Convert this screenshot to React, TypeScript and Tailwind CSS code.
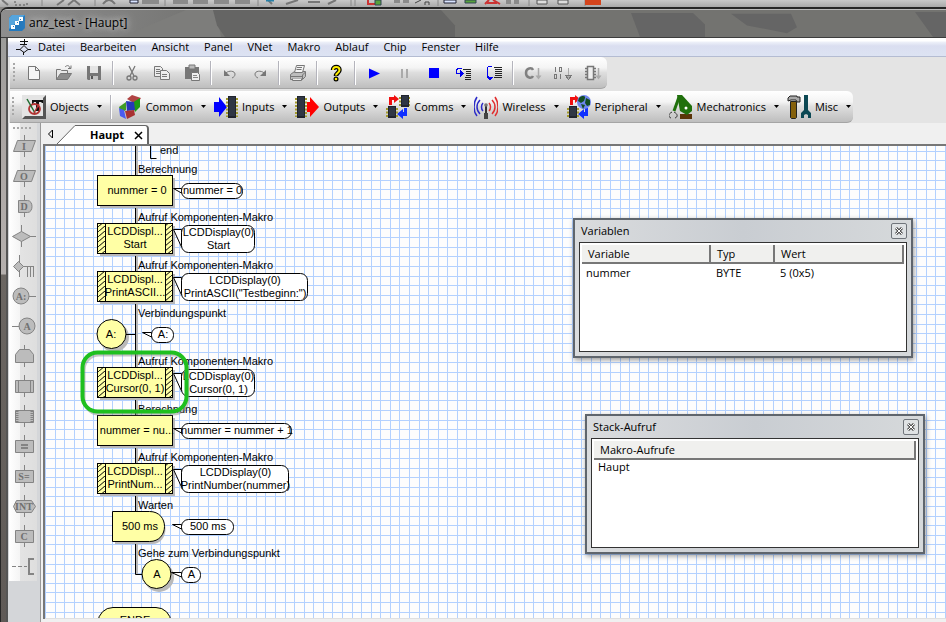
import React from 'react';

interface Callout {
  x: number;
  y: number;
  w: number;
  h: number;
  lines: string[];
}

interface MacroNode {
  y: number;
  label: string;
  lines: string[];
  striped: boolean;
  callout: Callout;
}

interface Tool {
  name: string;
  icon: React.ReactNode;
}

const menus = ['Datei', 'Bearbeiten', 'Ansicht', 'Panel', 'VNet', 'Makro', 'Ablauf', 'Chip', 'Fenster', 'Hilfe'];

const nodes: MacroNode[] = [
  { y: 29, label: 'Berechnung', lines: ['nummer = 0'], striped: false, callout: { x: 136, y: 37, w: 61, h: 15, lines: ['nummer = 0'] } },
  { y: 77, label: 'Aufruf Komponenten-Makro', lines: ['LCDDispl...', 'Start'], striped: true, callout: { x: 136, y: 79, w: 73, h: 27, lines: ['LCDDisplay(0)', 'Start'] } },
  { y: 125, label: 'Aufruf Komponenten-Makro', lines: ['LCDDispl...', 'PrintASCII...'], striped: true, callout: { x: 136, y: 127, w: 126, h: 27, lines: ['LCDDisplay(0)', 'PrintASCII("Testbeginn:")'] } },
  { y: 221, label: 'Aufruf Komponenten-Makro', lines: ['LCDDispl...', 'Cursor(0, 1)'], striped: true, callout: { x: 136, y: 223, w: 73, h: 27, lines: ['LCDDisplay(0)', 'Cursor(0, 1)'] } },
  { y: 269, label: 'Berechnung', lines: ['nummer = nu...'], striped: false, callout: { x: 136, y: 277, w: 110, h: 15, lines: ['nummer = nummer + 1'] } },
  { y: 317, label: 'Aufruf Komponenten-Makro', lines: ['LCDDispl...', 'PrintNum...'], striped: true, callout: { x: 136, y: 319, w: 107, h: 27, lines: ['LCDDisplay(0)', 'PrintNumber(nummer)'] } },
];

const gridX = Array.from({ length: 240 }, (_, i) => Math.floor(0.7 + 9.573 * i));
const gridY = Array.from({ length: 140 }, (_, i) => Math.floor(5.3 + 9.6 * i));

const NewIcon = () => <path d="M5.5 4.500h7l4 4v9h-11zM12.5 4.500v4h4" fill="#f6f6f6" stroke="#777" />;

const OpenIcon = () => (
  <g fill="none" stroke="#777">
    <path d="M3.500 17.500v-10h4l1 1h6v3" fill="#e8e8e8" />
    <path d="M3.500 17.500l4-6h11l-4 6z" fill="#8d8d8d" />
    <path d="M12 5c2-2 4-2 5 1M15 6.500h3v-3" />
  </g>
);

const SaveIcon = () => (
  <g>
    <path d="M4 4h14v14H5l-1-1z" fill="#777" />
    <path d="M7 4h8v7H7z" fill="#e4e4e4" />
    <path d="M7 14h8v4H7z" fill="#c4c4c4" />
    <path d="M8 14h2v3H8z" fill="#555" />
  </g>
);

const CutIcon = () => (
  <g fill="none" stroke="#777" strokeWidth="1.300">
    <path d="M8 4l5 10M14 4l-5 10" />
    <circle cx="8" cy="16" r="2" />
    <circle cx="14" cy="16" r="2" />
  </g>
);

const CopyIcon = () => (
  <g fill="#ededed" stroke="#777">
    <path d="M3.500 4.500h6l2 2v8h-8z" />
    <path d="M9.500 8.500h6l3 3v6h-9z" />
    <path d="M5 7.500h4M5 9.500h4M5 11.500h4M11 12.500h5M11 14.500h5" />
  </g>
);

const PasteIcon = () => (
  <g>
    <path d="M4 5h14v12H4z" fill="#777" />
    <path d="M8 3h6v4H8z" fill="#bbb" stroke="#777" />
    <path d="M10.500 10.500h6l2 2v6h-8z" fill="#f0f0f0" stroke="#777" />
    <path d="M12 13.500h4M12 15.500h5" stroke="#888" />
  </g>
);

const UndoIcon = () => (
  <g>
    <path d="M7 11c3-3 9-2 9 1 0 2-1 3-3 4" fill="none" stroke="#777" />
    <path d="M5 8v6h6z" fill="#777" />
  </g>
);

const RedoIcon = () => (
  <g>
    <path d="M15 11c-3-3-9-2-9 1 0 2 1 3 3 4" fill="none" stroke="#777" />
    <path d="M17 8v6h-6z" fill="#777" />
  </g>
);

const PrintIcon = () => (
  <g stroke="#777">
    <path d="M3.500 12.500l4-3h11v5l-3 3h-12z" fill="#bdbdbd" />
    <path d="M7.500 10.500l2-7h8l-2 7z" fill="#f4f4f4" />
    <path d="M10 5.500h5M9.500 7.500h5M3.500 14.500h12M15.500 17v-4l3-3M6 16.500h8" fill="none" />
    <path d="M5.500 16.500v2h9v-2" fill="#eee" />
  </g>
);

const HelpIcon = () => (
  <g fill="none">
    <path d="M8 8c0-4 6.500-4 6.500 0 0 3-3.500 3-3.500 6" stroke="#000" strokeWidth="4.500" />
    <circle cx="11" cy="17" r="2.500" fill="#000" />
    <path d="M8 8c0-4 6.500-4 6.500 0 0 3-3.500 3-3.500 5.500" stroke="#ffee00" strokeWidth="2" />
    <circle cx="11" cy="17" r="1.300" fill="#ffee00" />
  </g>
);

const StepIntoIcon = () => (
  <g fill="none" shapeRendering="crispEdges">
    <path d="M10 7.500h8M13 9.500h5M13 11.500h5M13 13.500h5M12 15.500h6M12 17.500h6" stroke="#222" />
    <path d="M9 6.500H5L3.500 8v3.500H7" stroke="#0000f0" />
    <path d="M7 8l4 3.500L7 15z" fill="#0000f0" />
  </g>
);

const StepOutIcon = () => (
  <g fill="none" shapeRendering="crispEdges">
    <path d="M11 5.500h8M12 7.500h7M12 9.500h7M12 11.500h7M12 13.500h7M11 15.500h8" stroke="#222" />
    <path d="M9 4.500H5.500L4.500 6v8l3 3" stroke="#0000f0" />
    <path d="M4 15h6l-3 4z" fill="#0000f0" />
  </g>
);

const DownArrow = () => (
  <g>
    <path d="M17.500 6v9" stroke="#aaa" strokeWidth="1.500" />
    <path d="M14.500 13.500h6l-3 4z" fill="#aaa" />
  </g>
);

const CompileCIcon = () => (
  <g>
    <path d="M12 8c-1-2.500-7-2.500-7 3s6 5.500 7 3" fill="none" stroke="#808080" strokeWidth="2.500" />
    <DownArrow />
  </g>
);

const CompileHexIcon = () => (
  <g fill="none" stroke="#777" shapeRendering="crispEdges">
    <path d="M4.500 5v5M8.500 5.500h2v4h-2zM3.500 12.500h2v4h-2zM9.500 12v5" />
    <DownArrow />
  </g>
);

const CompileChipIcon = () => (
  <g>
    <path d="M6.500 4.500h6v13h-6z" fill="#eee" stroke="#777" strokeWidth="1.500" />
    <path d="M4 6.500h2M4 9.500h2M4 12.500h2M4 15.500h2M13 6.500h2M13 9.500h2M13 12.500h2M13 15.500h2" stroke="#777" strokeWidth="1.500" />
    <DownArrow />
  </g>
);

const toolGroups: Tool[][] = [
  [
    { name: 'Neu', icon: <NewIcon /> },
    { name: 'Öffnen', icon: <OpenIcon /> },
    { name: 'Speichern', icon: <SaveIcon /> },
  ],
  [
    { name: 'Ausschneiden', icon: <CutIcon /> },
    { name: 'Kopieren', icon: <CopyIcon /> },
    { name: 'Einfügen', icon: <PasteIcon /> },
  ],
  [
    { name: 'Rückgängig', icon: <UndoIcon /> },
    { name: 'Wiederholen', icon: <RedoIcon /> },
  ],
  [{ name: 'Drucken', icon: <PrintIcon /> }],
  [{ name: 'Hilfe', icon: <HelpIcon /> }],
  [
    { name: 'Start', icon: <path d="M6 6.500l11 5-11 5z" fill="#0000ff" /> },
    { name: 'Pause', icon: <path d="M8 7h2v9H8zM13 7h2v9h-2z" fill="#aaa" /> },
    { name: 'Stopp', icon: <path d="M6 6h10v10H6z" fill="#0000ff" /> },
    { name: 'Einzelschritt hinein', icon: <StepIntoIcon /> },
    { name: 'Einzelschritt darüber', icon: <StepOutIcon /> },
  ],
  [
    { name: 'Nach C kompilieren', icon: <CompileCIcon /> },
    { name: 'Nach HEX kompilieren', icon: <CompileHexIcon /> },
    { name: 'Zum Chip übertragen', icon: <CompileChipIcon /> },
  ],
];

const Chip = ({ x, h = 22, y = 1 }: { x: number; h?: number; y?: number }) => (
  <g>
    <path
      d={`M${x - 1} ${y + 2}v${h - 3}M${x + 9} ${y + 2}v${h - 3}`}
      stroke="#a39a2c"
      strokeWidth="2"
      strokeDasharray="2 1.500"
    />
    <rect x={x} y={y} width="8" height={h} fill="#20242e" />
    <rect x={x + 1} y={y + 1} width="6" height={h - 3} fill="#2f3644" />
  </g>
);

const CommsArrows = () => (
  <g>
    <path d="M3 10V2h5v-2l5 4-5 4V5H6v5z" fill="#f01010" />
    <path d="M21 13v8h-4v3l-6-5 6-5v3h1v-4z" fill="#1030ff" />
  </g>
);

const components: Tool[] = [
  {
    name: 'Objects',
    icon: (
      <g fill="none">
        <path d="M0 0h24v24H0z" fill="#e4e4e4" />
        <path d="M24 0v24H0l3-3h18V3z" fill="#555" />
        <path d="M10 5h11v3h-1l-1-1h-2v9h-3V7h-2l-1 2h-1z" fill="#111" />
        <ellipse cx="12.500" cy="14" rx="5.500" ry="5" stroke="#b43434" strokeWidth="1.800" />
        <path d="M5 4l8 14" stroke="#1c6a2e" strokeWidth="1.500" />
        <path d="M12 18l5-9" stroke="#b43434" strokeWidth="1.500" />
      </g>
    ),
  },
  {
    name: 'Common',
    icon: (
      <g>
        <path d="M9 4l5-4 9 3-3 5-6-1z" fill="#b04444" />
        <path d="M14 8l8-5v9l-5 5z" fill="#1e9a16" />
        <path d="M1 12l7-5v8l-5 3z" fill="#3f9c24" />
        <path d="M8 6l8 1 1 8-8 1z" fill="#2638b8" />
        <path d="M1 13l5 2 2 9-6-3z" fill="#4a5cf0" />
        <path d="M7 16l9-1 1 5-8 4z" fill="#a83232" />
      </g>
    ),
  },
  {
    name: 'Inputs',
    icon: (
      <g>
        <path d="M0 7h5V2l8 10-8 10v-5H0z" fill="#0000ff" />
        <Chip x={14} />
      </g>
    ),
  },
  {
    name: 'Outputs',
    icon: (
      <g>
        <path d="M12 7h3V2l9 10-9 10v-5h-3z" fill="#ff0000" />
        <Chip x={2} />
      </g>
    ),
  },
  {
    name: 'Comms',
    icon: (
      <g>
        <CommsArrows />
        <Chip x={2} y={11} h={12} />
        <Chip x={15} y={0} h={12} />
      </g>
    ),
  },
  {
    name: 'Wireless',
    icon: (
      <g fill="none" strokeWidth="1.500">
        <path d="M9 8c-2 2-2 6 0 8M6 5c-4 4-4 10 0 14M3 2c-4 6-4 14 0 19" stroke="#2c2cc8" />
        <path d="M15 8c2 2 2 6 0 8M18 5c4 4 4 10 0 14M21 2c4 6 4 14 0 19" stroke="#e03030" />
        <path d="M12 10v13" stroke="#333" strokeWidth="2" />
        <path d="M10 18h4v6h-4z" fill="#444" />
        <circle cx="12" cy="10" r="1.800" fill="#777" />
      </g>
    ),
  },
  {
    name: 'Peripheral',
    icon: (
      <g>
        <CommsArrows />
        <Chip x={2} y={11} h={12} />
        <circle cx="17" cy="7" r="7" fill="#6f86ee" />
        <path d="M12 3c3-3 7-2 6 0l-1 3-3 2-3-2zM19 3l4 2v5l-3 1-2-3zM14 9l4 1-2 4z" fill="#144d24" />
      </g>
    ),
  },
  {
    name: 'Mechatronics',
    icon: (
      <g>
        <path d="M11 19h12v5H11z" fill="#5a3408" />
        <path d="M8 0h5l10 11v5l-5 4-7-4z" fill="#20700c" />
        <path d="M10 2L5 16" stroke="#20700c" strokeWidth="3" />
        <circle cx="17" cy="13" r="1.500" fill="#fff" />
        <path d="M3 17c-4 2-4 5-1 6M5 17c4 2 4 5 1 6" fill="none" stroke="#333" />
      </g>
    ),
  },
  {
    name: 'Misc',
    icon: (
      <g>
        <path d="M1 3l2-2h7v1h3v5h-3l-1-2H4L1 6z" fill="#aaa" stroke="#222" />
        <path d="M3.500 6.500h6v16l-1 1h-4l-1-1z" fill="#84600c" stroke="#222" />
        <path d="M17 0h4v15l3 3v5h-3v-3l-2-1-2 1v3h-3v-5l3-3z" fill="#0c4854" />
      </g>
    ),
  },
];

const Glyph = ({ children, x = 15 }: { children: string; x?: number }) => (
  <text x={x} y="19" textAnchor="middle" className="font-['Liberation_Serif',serif] text-[10px] font-bold" fill="#707070" stroke="none">
    {children}
  </text>
);

const sideTools: Tool[] = [
  { name: 'Eingabe', icon: <><path d="M15.500 4v22" /><path d="M8.500 9.500h18l-4 11h-18z" /><Glyph>I</Glyph></> },
  { name: 'Ausgabe', icon: <><path d="M15.500 4v22" /><path d="M8.500 9.500h18l-4 11h-18z" /><Glyph>O</Glyph></> },
  { name: 'Pause', icon: <><path d="M15.500 4v22" /><path d="M9.500 9.500h9c6 0 6 12 0 12h-9z" /><Glyph>D</Glyph></> },
  { name: 'Entscheidung', icon: <><path d="M12.500 4v22M20 15.500h7" /><path d="M3.500 15.500l9-5 9 5-9 5z" /></> },
  { name: 'Wechsel', icon: <><path d="M10.500 4v22M14 15.500h11M18.500 15v11M21.500 15v11M24.500 15v11" /><path d="M4.500 15.500l5-5 5 5-5 5z" /></> },
  { name: 'Verbindungspunkt', icon: <><path d="M18 15.500h9" /><circle cx="12" cy="15" r="8" /><Glyph x={12}>A:</Glyph></> },
  { name: 'Sprung', icon: <><path d="M3 15.500h9" /><circle cx="18" cy="15" r="8" /><Glyph x={18}>A</Glyph></> },
  { name: 'Schleife', icon: <><path d="M15.500 4v22" /><path d="M6.500 21.500v-8l4-5h10l4 5v8z" /></> },
  { name: 'Makro', icon: <><path d="M15.500 4v22" /><path d="M6.500 9.500h18v12h-18zM9.500 9.500v12M21.500 9.500v12" /></> },
  { name: 'Komponenten-Makro', icon: <><path d="M15.500 4v22" /><path d="M6.500 9.500h18v12h-18z" /><path d="M8 10v12M23 10v12" strokeDasharray="1 1" strokeWidth="3" /></> },
  { name: 'Berechnung', icon: <><path d="M15.500 4v22" /><path d="M6.500 9.500h18v12h-18z" /><path d="M12 14h7M12 17h7" strokeWidth="2" /></> },
  { name: 'Zeichenkette', icon: <><path d="M15.500 4v22" /><path d="M6.500 9.500h18v12h-18z" /><Glyph>S=</Glyph></> },
  { name: 'Interrupt', icon: <><path d="M15.500 4v22" /><path d="M4.500 15.500l3-6h15l4 6-4 6h-15z" /><Glyph>INT</Glyph></> },
  { name: 'C-Code', icon: <><path d="M15.500 4v22" /><path d="M6.500 9.500h18v12h-18z" /><Glyph>C</Glyph></> },
  { name: 'Kommentar', icon: <><path d="M3 15.500h15" strokeDasharray="4 2" /><path d="M25 8h-5v15h5" strokeWidth="2" fill="none" /></> },
];

const Grip = () => (
  <span className="mr-1 ml-0.5 h-5 w-0.5 shrink-0 bg-[repeating-linear-gradient(#a8a8a8_0_2px,transparent_2px_4px)]" />
);

const Separator = () => <span className="mx-[3px] h-6 w-0.5 shrink-0 border-r border-white bg-[#b4b4bc]" />;

const CalloutShape = ({ callout, tipX, tipY }: { callout: Callout; tipX: number; tipY: number }) => {
  const { x, y, w, h, lines } = callout;
  const cx = x + 1 + w / 2;
  return (
    <g>
      <path d={`M${x + 0.5} ${tipY + 0.5}H${tipX + 0.5}L${x + 0.5} ${y + h - 5}z`} fill="#fff" stroke="#000" />
      <rect x={x + 0.5} y={y + 0.5} width={w} height={h} rx="7" fill="#fff" stroke="#000" />
      {lines.map((line, i) => (
        <text key={line} x={cx} y={y + 11 + i * 13} textAnchor="middle">
          {line}
        </text>
      ))}
    </g>
  );
};

const FlowNode = ({ node }: { node: MacroNode }) => {
  const { y, label, lines, striped, callout } = node;
  return (
    <g>
      <text x="93" y={y - 2}>{label}</text>
      <rect x="55" y={y + 3} width="75" height="30" fill="#b9b9b9" />
      <rect x="52.5" y={y + 0.5} width="75" height="30" fill="#ffffa5" stroke="#000" />
      {striped && (
        <g stroke="#000">
          <rect x="52.5" y={y + 0.5} width="8" height="30" fill="url(#hatch)" />
          <rect x="120.5" y={y + 0.5} width="7" height="30" fill="url(#hatch)" />
        </g>
      )}
      {lines.map((line, i) => (
        <text key={line} x={striped ? 90 : 92} y={(striped ? y + 12 : y + 19) + i * 13} textAnchor="middle">
          {line}
        </text>
      ))}
      <CalloutShape callout={callout} tipX={128} tipY={striped ? y + 6 : y + 13} />
    </g>
  );
};

const Flowchart = () => (
  <svg className="absolute inset-0 h-full w-full font-['Liberation_Sans',sans-serif] text-[11px]" role="img" aria-label="Ablaufdiagramm Haupt">
    <defs>
      <pattern id="hatch" width="6" height="5" patternUnits="userSpaceOnUse">
        <rect width="6" height="5" fill="#ffffa5" />
        <path d="M-1 6L7 -1" stroke="#000" strokeWidth="1" />
      </pattern>
    </defs>
    <g fill="#b3d1ff" shapeRendering="crispEdges">
      {gridX.map(x => <rect key={x} x={x} y="0" width="1" height="100%" />)}
      {gridY.map(y => <rect key={y} x="0" y={y} width="100%" height="1" />)}
    </g>

    {/* main line with its drop shadow */}
    <path d="M92 0V428" stroke="#b9b9b9" strokeWidth="2" />
    <path d="M90.500 0V428.500H97" fill="none" stroke="#000" />
    <path d="M105.500 0v12.500h6" fill="none" stroke="#000" />
    <text x="115" y="8">end</text>

    {nodes.map(node => <FlowNode key={node.y} node={node} />)}

    {/* connection point A: */}
    <text x="93" y="171">Verbindungspunkt</text>
    <circle cx="69" cy="191" r="15" fill="#b9b9b9" />
    <circle cx="66.500" cy="188" r="14.500" fill="#ffffa5" stroke="#000" />
    <path d="M81 188.500h9" stroke="#000" />
    <text x="66" y="192" textAnchor="middle">A:</text>
    <CalloutShape callout={{ x: 106, y: 181, w: 22, h: 15, lines: ['A:'] }} tipX={97} tipY={186} />

    {/* delay */}
    <text x="93" y="363">Warten</text>
    <path d="M70 368h37c18 0 18 30 0 30H70z" fill="#b9b9b9" />
    <path d="M67.500 365.500h37c20 0 20 30 0 30h-37z" fill="#ffffa5" stroke="#000" />
    <text x="95" y="384" textAnchor="middle">500 ms</text>
    <CalloutShape callout={{ x: 136, y: 373, w: 52, h: 15, lines: ['500 ms'] }} tipX={127} tipY={378} />

    <text x="93" y="411">Gehe zum Verbindungspunkt</text>
    <circle cx="114" cy="431" r="15" fill="#b9b9b9" />
    <circle cx="111.500" cy="428" r="14.500" fill="#ffffa5" stroke="#000" />
    <text x="112" y="432" textAnchor="middle">A</text>
    <CalloutShape callout={{ x: 136, y: 421, w: 19, h: 15, lines: ['A'] }} tipX={126} tipY={426} />

    <rect x="53" y="461.500" width="73" height="30" rx="15" fill="#ffffa5" stroke="#000" />
    <text x="90" y="478" textAnchor="middle">ENDE</text>

    {/* highlighted step */}
    <rect x="39" y="209" width="104" height="59" rx="15" fill="none" stroke="#808080" strokeOpacity="0.45" strokeWidth="3" />
    <rect x="37.500" y="206.500" width="104" height="59" rx="15" fill="none" stroke="#1fc01f" strokeWidth="4" />
  </svg>
);

const ToolWindow = ({ title, className, children }: { title: string; className: string; children: React.ReactNode }) => (
  <section className={`absolute flex h-[140px] w-[340px] flex-col border-2 border-[#5f656c] bg-linear-to-r from-[#dadcde] via-[#c9cdd2] to-[#d6d9db] px-1 pb-1 shadow-[1px_2px_5px_#0006] ${className}`}>
    <header className="flex h-[22px] shrink-0 items-center justify-between pl-0.5">
      <h2>{title}</h2>
      <button className="flex size-4 items-center justify-center rounded-xs border border-[#70757b] bg-[#dfe2e4]" aria-label={`${title} schließen`}>
        <svg width="8" height="8" fill="none">
          <path d="M1 1l6 6M7 1L1 7" stroke="#555" strokeWidth="3" />
          <path d="M1 1l6 6M7 1L1 7" stroke="#fff" />
        </svg>
      </button>
    </header>
    <div className="flex-1 border border-[#333] bg-white p-0.5">{children}</div>
  </section>
);

const headCell = 'h-[18px] border-r-2 border-b-2 border-[#777] bg-[#f0f0ee] pl-1.5 text-left font-normal';

export default function App() {
  return (
    <div className="flex min-h-screen flex-col overflow-hidden bg-[#8b8987] font-['Open_Sans',sans-serif] text-[11px] leading-4 text-black">
      <div className="h-[7px] bg-linear-to-b from-[#c9c9c9] to-[#a9a9a9]">
        <svg className="h-[7px] w-full" fill="none" aria-hidden="true">
          <path d="M2 0l6 5M57 5l7-5M68 5l6-5 6 5M103 4q6-8 12 0M268 0l4 4M286 4l12-4M308 2h12M328 4l8-4" stroke="#777" strokeWidth="2" />
          <path d="M15 1v4h12V1" stroke="#555" strokeDasharray="2 2" />
          <path d="M42 0v6M95 0v6M165 0v6M258 0v6M351 0v6M355 0v6M438 0v6M529 0v6M585 0v6" stroke="#8a8a8a" />
          <path d="M130 0h8v3h-8zM444 0h12v3h-12z" fill="#d8e4ff" stroke="#223" />
          <path d="M142 0h17v4h-17zM173 0h15v4h-15zM193 0h15v4h-15zM214 0h15v4h-15zM235 0h15v4h-15zM394 0h6v3h-6zM403 0h6v3h-6zM506 0h5v4h-5zM514 0h5v4h-5z" fill="#8b8b8b" />
          <path d="M368 0v4h7" stroke="#c33" strokeWidth="2" />
          <path d="M375 0h6v5h-6zM465 0h11v3h-11z" fill="#57a23c" stroke="#345" />
          <path d="M485 4l4-4M493 0l7 4M487 3h10" stroke="#c33" strokeWidth="2" />
          <path d="M537 0h10v4h-10zM558 0h10v4h-10z" fill="#ddd" stroke="#555" />
          <path d="M585 0h16v5h-16z" fill="#d4441c" />
          <path d="M415 3l6-3M425 5v-3h4v3" stroke="#444" />
          <path d="M266 0h8" stroke="#2780a8" strokeWidth="3" />
        </svg>
      </div>

      <div className="flex flex-1 flex-col rounded-tl-lg border-t-2 border-l border-[#262626]">
        <header className="relative flex h-7 shrink-0 items-center gap-1 overflow-hidden rounded-tl-md border-t border-[#b9b9b9] bg-[#737370] pr-2 pb-0.5 pl-2">
          <svg className="absolute inset-0 h-full w-full" preserveAspectRatio="none" viewBox="0 0 945 28" aria-hidden="true">
            <defs>
              <linearGradient id="glow">
                <stop offset="0" stopColor="#8e8e8e" />
                <stop offset="1" stopColor="#737371" />
              </linearGradient>
            </defs>
            <path d="M0 0h215v28H0z" fill="url(#glow)" />
            <path d="M120 28L185 0h30l5 28z" fill="#7d7d7b" />
            <path d="M212 0h228l14 16v12H224l-8-12z" fill="#656564" />
            <path d="M630 3h62l12 12v13h-65zM730 4h60l6 14-10 6-40-8zM914 2h32v26h-14z" fill="#656565" />
          </svg>
          <svg className="relative" width="16" height="16" aria-hidden="true">
            <path d="M3 0h13v13l-3 3H0V3z" fill="#2479bd" />
            <path d="M3 0h13L0 14V3z" fill="#55a4dc" />
            <path d="M4 12l4-4 4-5" stroke="#fff" />
            <path d="M2 10h4v4H2zM6 6h4v4H6zM10 2h4v4h-4z" fill="#fff" />
            <path d="M4 11h1v1H4zM8 7h1v1H8zM11 4h1v1h-1z" fill="#2479bd" />
          </svg>
          <h1 className="relative text-[12px] [text-shadow:0_0_6px_#ccc,0_0_10px_#ccc]">anz_test - [Haupt]</h1>
        </header>

        <div className="flex flex-1 border-t border-[#3c3c3c]">
          <div className="w-[7px] shrink-0 border-r-2 border-[#555] bg-[linear-gradient(#9c9c9a,#aaa5a3_90px,#b5b0ae_236px,#6b6662_237px,#5f5a57)]" />
          <div className="flex min-w-0 flex-1 flex-col bg-[#e4e4e4]">
            <nav className="flex h-[19px] shrink-0 items-center gap-[15px] border-b border-[#b4bcd2] bg-[linear-gradient(#fff_0_3px,#eef1f9_4px,#dadef0_8px,#dde3f3)] pl-2">
              <svg className="-mr-2.5 w-[17px] shrink-0" height="16" fill="none" stroke="#111" aria-hidden="true">
                <path d="M4 2.500h8M8.500 0v6M4 5.500h7M8 6.500l-4 4 4 3 4-3zM0 10.500h4M12 10.500h3M7.500 13v3" />
              </svg>
              {menus.map(menu => (
                <button key={menu} className="shrink-0">{menu}</button>
              ))}
            </nav>

            <div className="flex shrink-0 flex-col items-start gap-0.5 pl-0.5">
              <div role="toolbar" aria-label="Standard" className="flex h-8 items-center rounded-r-md border-b border-[#a5a5a5] bg-[linear-gradient(#fff,#f4f4f4_35%,#dedede_50%,#bebebe)] pl-px">
                <Grip />
                {toolGroups.map((group, i) => (
                  <React.Fragment key={i}>
                    {i > 0 && <Separator />}
                    {group.map(tool => (
                      <button key={tool.name} aria-label={tool.name} className="flex w-[30px] justify-center">
                        <svg width="22" height="22">{tool.icon}</svg>
                      </button>
                    ))}
                  </React.Fragment>
                ))}
              </div>
              <div role="toolbar" aria-label="Komponenten" className="flex h-8 items-center gap-2 rounded-r-md border-b border-[#a5a5a5] bg-[linear-gradient(#fff,#f4f4f4_35%,#dedede_50%,#bebebe)] pr-0.5">
                <Grip />
                {components.map((item, i) => (
                  <React.Fragment key={item.name}>
                    {i === 1 && <span className="-mr-0.5 h-6 w-0.5 shrink-0 border-r border-white bg-[#b4b4bc]" />}
                    <button className={i === 0 ? '-ml-1 flex shrink-0 items-center gap-1' : 'flex shrink-0 items-center gap-1'}>
                      <svg width="24" height="24">{item.icon}</svg>
                      {item.name}
                      <svg className="ml-1" width="5" height="3"><path d="M0 0h5L2.500 3z" /></svg>
                    </button>
                  </React.Fragment>
                ))}
              </div>
            </div>

            <div className="flex flex-1">
              <aside className="flex w-8 shrink-0 flex-col bg-[#d4d6d9] pl-px">
                <div role="toolbar" aria-label="Symbole" className="flex w-[28px] flex-col bg-[linear-gradient(90deg,#fff,#f4f4f4_40%,#e3e3e3_41%,#dedede)]">
                  <span className="mt-1 mb-0.5 ml-1 h-0.5 w-5 bg-[repeating-linear-gradient(90deg,#a8a8a8_0_2px,transparent_2px_4px)]" />
                  {sideTools.map(tool => (
                    <button key={tool.name} aria-label={tool.name} className="h-[30px]">
                      <svg width="28" height="30" fill="#bcbcbc" stroke="#848484">{tool.icon}</svg>
                    </button>
                  ))}
                </div>
              </aside>

              <main className="flex min-w-0 flex-1 flex-col border-l border-[#999] bg-[#f0f0f0]">
                <div role="tablist" className="flex h-[21px] shrink-0 items-end pl-1">
                  <button aria-label="Zurück blättern" className="self-center px-0.5">
                    <svg width="7" height="10" fill="none"><path d="M5.500 1v8L1.500 5z" stroke="#000" /></svg>
                  </button>
                  <div className="flex items-end">
                    <svg width="20" height="19" aria-hidden="true">
                      <path d="M1 19L19 .500h1V19z" fill="#fff" />
                      <path d="M1 19L19 .500h1" fill="none" stroke="#666" />
                    </svg>
                    <div className="flex h-[19px] items-center gap-2.5 rounded-tr-sm border-t border-r-2 border-[#666] bg-white pr-1 pl-3.5">
                      <button role="tab" aria-selected="true" className="font-bold">Haupt</button>
                      <button aria-label="Haupt schließen">
                        <svg width="9" height="9"><path d="M1 1l7 7M8 1L1 8" stroke="#000" strokeWidth="1.500" /></svg>
                      </button>
                    </div>
                  </div>
                </div>
                <div className="mb-[3px] ml-0.5 flex flex-1 flex-col border-t-2 border-l-2 border-[#777]">
                  <div className="relative flex-1 overflow-hidden border-b border-[#e0e0e0] bg-[#fdfdfd]">
                    <Flowchart />
                    <ToolWindow title="Variablen" className="top-[72px] left-[528px]">
                      <table className="w-full table-fixed leading-[14px]">
                        <thead>
                          <tr>
                            <th className={`w-32 ${headCell}`}>Variable</th>
                            <th className={`w-16 ${headCell}`}>Typ</th>
                            <th className={headCell}>Wert</th>
                          </tr>
                        </thead>
                        <tbody>
                          <tr>
                            <td className="pt-0.5 pl-1">nummer</td>
                            <td className="pt-0.5 pl-1.5">BYTE</td>
                            <td className="pt-0.5 pl-1.5">5 (0x5)</td>
                          </tr>
                        </tbody>
                      </table>
                    </ToolWindow>
                    <ToolWindow title="Stack-Aufruf" className="top-[268px] left-[540px]">
                      <table className="w-full table-fixed leading-[14px]">
                        <thead>
                          <tr>
                            <th className={headCell}>Makro-Aufrufe</th>
                          </tr>
                        </thead>
                        <tbody>
                          <tr>
                            <td className="pl-1">Haupt</td>
                          </tr>
                        </tbody>
                      </table>
                    </ToolWindow>
                  </div>
                </div>
              </main>
            </div>
          </div>
        </div>
      </div>
    </div>
  );
}
